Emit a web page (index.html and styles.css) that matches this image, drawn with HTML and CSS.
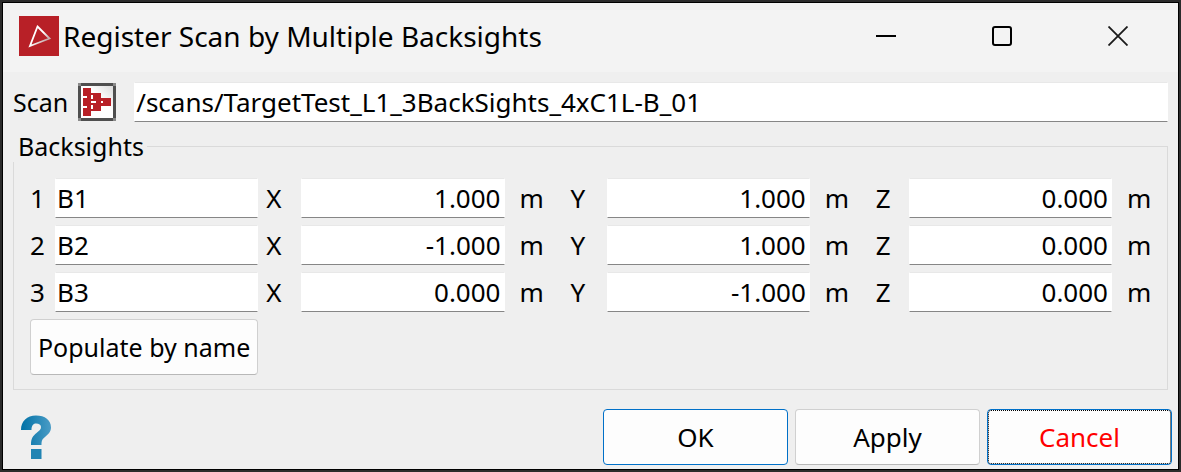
FILE: index.html
```
<!DOCTYPE html>
<html lang="en">
<head>
  <meta charset="UTF-8">
  <meta name="viewport" content="width=device-width, initial-scale=1.0">
  <title>Register Scan by Multiple Backsights</title>
  <link rel="stylesheet" href="styles.css">
</head>
<body>
  <div class="window">
    <header class="titlebar">
      <svg class="app-icon" viewBox="0 0 40 40" aria-hidden="true">
        <defs>
          <linearGradient id="edge" x1="0" y1="0" x2="1" y2="1">
            <stop offset="0.5" stop-color="#fff"/>
            <stop offset="0.75" stop-color="#c9b0b2"/>
          </linearGradient>
        </defs>
        <rect width="40" height="40" fill="#b82027"/>
        <path d="M18.5 10.5 L30.500 22.500 L11 30 Z" fill="none" stroke="url(#edge)" stroke-width="1.8"/>
      </svg>
      <h1 class="title">Register Scan by Multiple Backsights</h1>
      <div class="window-buttons">
        <button type="button" aria-label="Minimize">
          <svg viewBox="0 0 20 20"><path d="M0 10H20" stroke="#000" stroke-width="2"/></svg>
        </button>
        <button type="button" aria-label="Maximize">
          <svg viewBox="0 0 20 20"><rect x="1" y="1" width="18" height="18" rx="2" fill="none" stroke="#000" stroke-width="2"/></svg>
        </button>
        <button type="button" aria-label="Close">
          <svg viewBox="0 0 20 20"><path d="M0.5 0.5L19.5 19.5M19.5 0.5L0.5 19.5" stroke="#1a1a1a" stroke-width="1.8"/></svg>
        </button>
      </div>
    </header>

    <form class="content">
      <div class="scan-row">
        <label for="scan" class="caption">Scan</label>
        <button type="button" class="pick" aria-label="Select scan">
          <svg viewBox="0 0 38 38">
            <defs>
              <linearGradient id="shade" x1="0" y1="1" x2="1" y2="0">
                <stop offset="0.6" stop-color="#fff"/>
                <stop offset="1" stop-color="#dcdcdc"/>
              </linearGradient>
            </defs>
            <rect width="38" height="38" fill="#8a8a8a"/>
            <path d="M3 0H35V3H38V35H35V38H3V35H0V3H3Z" fill="#4f4f4f"/>
            <rect x="3" y="3" width="32" height="32" fill="url(#shade)"/>
            <g fill="#b82027">
              <path d="M5 5h8v8h-8zM5 15h8v8h-8zM5 25h8v8h-8z"/>
              <path d="M15 10h8v8h-8zM15 20h8v8h-8zM25 15h8v8h-8z"/>
              <path d="M13 10h2v2h-2zM13 16h2v2h-2zM13 20h2v2h-2zM13 26h2v2h-2z"/>
              <path d="M23 15h2v3h-2zM23 20h2v3h-2zM9 13h4v2h-4zM9 23h4v2h-4zM18 18h5v2h-5z"/>
            </g>
          </svg>
        </button>
        <input type="text" id="scan" class="field" value="/scans/TargetTest_L1_3BackSights_4xC1L-B_01">
      </div>

      <fieldset class="group">
        <legend class="caption">Backsights</legend>
        <div class="points">
          <label for="name1">1</label>
          <input type="text" id="name1" class="field" value="B1">
          <label for="x1" class="x">X</label>
          <input type="text" id="x1" class="field num" value="1.000">
          <span class="unit">m</span>
          <label for="y1" class="axis">Y</label>
          <input type="text" id="y1" class="field num" value="1.000">
          <span class="unit">m</span>
          <label for="z1" class="axis">Z</label>
          <input type="text" id="z1" class="field num" value="0.000">
          <span class="unit">m</span>

          <label for="name2">2</label>
          <input type="text" id="name2" class="field" value="B2">
          <label for="x2" class="x">X</label>
          <input type="text" id="x2" class="field num" value="-1.000">
          <span class="unit">m</span>
          <label for="y2" class="axis">Y</label>
          <input type="text" id="y2" class="field num" value="1.000">
          <span class="unit">m</span>
          <label for="z2" class="axis">Z</label>
          <input type="text" id="z2" class="field num" value="0.000">
          <span class="unit">m</span>

          <label for="name3">3</label>
          <input type="text" id="name3" class="field" value="B3">
          <label for="x3" class="x">X</label>
          <input type="text" id="x3" class="field num" value="0.000">
          <span class="unit">m</span>
          <label for="y3" class="axis">Y</label>
          <input type="text" id="y3" class="field num" value="-1.000">
          <span class="unit">m</span>
          <label for="z3" class="axis">Z</label>
          <input type="text" id="z3" class="field num" value="0.000">
          <span class="unit">m</span>

          <button type="button" class="btn caption populate">Populate by name</button>
        </div>
      </fieldset>

      <footer class="actions">
        <button type="button" class="help" aria-label="Help">
          <svg viewBox="0 0 30 44">
            <defs>
              <linearGradient id="blue" x1="0" y1="0" x2="1" y2="0">
                <stop offset="0" stop-color="#0071a6"/>
                <stop offset="1" stop-color="#4a9cc6"/>
              </linearGradient>
            </defs>
            <path d="M0 15C0 6 6 0.500 15 0.500C24 0.500 30 5 30 12.500C30 17 27 19.500 24 22C21.500 24 20.500 25 20.500 30H10C10 23 12 21 15.500 18C18.500 15.500 20 14.500 20 12C20 10 18 8.500 15 8.500C12 8.500 10.500 11 10.500 15Z" fill="url(#blue)"/>
            <rect x="10" y="34" width="10.500" height="10" fill="#2184b3"/>
          </svg>
        </button>
        <button type="submit" class="btn ok">OK</button>
        <button type="button" class="btn">Apply</button>
        <button type="button" class="btn cancel">Cancel</button>
      </footer>
    </form>
  </div>
</body>
</html>
```
FILE: styles.css
```
:root {
  --bg: #efefef;
  --frame: #2b2b2b;
  --line: #dadada;
  --accent: #0070c8;
  --red: #ff0000;
}

* {
  box-sizing: border-box;
}

body {
  margin: 0;
  padding: 2px;
  min-height: 100vh;
  display: flex;
  background: var(--frame);
  color: #000;
  font-family: "Noto Sans", sans-serif;
  font-size: 26px;
  line-height: 32px;
}

button, input {
  font: inherit;
  color: inherit;
}

svg {
  display: block;
}

.window {
  flex: 1;
  min-width: 0;
  display: flex;
  flex-direction: column;
  border: 1px solid #000;
  background: var(--bg);
}

/* title bar */
.titlebar {
  display: flex;
  align-items: center;
  height: 69px;
  padding: 0 2px 3px 16px;
  background: #f3f3f3;
}

.app-icon {
  width: 40px;
  height: 40px;
}

.title {
  flex: 1;
  margin: 0 0 0 4px;
  font-size: 28px;
  font-weight: 400;
}

.window-buttons {
  display: flex;
}

.window-buttons button {
  display: flex;
  align-items: center;
  justify-content: center;
  width: 116px;
  height: 66px;
  padding: 0;
  border: none;
  background: none;
}

.window-buttons svg {
  width: 20px;
  height: 20px;
}

/* content */
.content {
  flex: 1;
  display: flex;
  flex-direction: column;
  padding: 10px 10px 4px;
}

.caption {
  font-size: 25px;
}

.scan-row {
  display: flex;
  align-items: center;
  margin-bottom: 8px;
}

.pick {
  width: 38px;
  height: 38px;
  margin: 0 18px 0 10px;
  padding: 0;
  border: none;
  background: none;
}

.field {
  flex: 1;
  min-width: 0;
  width: 100%;
  height: 40px;
  padding: 0 1px;
  border: 1px solid #fff;
  border-top-color: #e8e8e8;
  border-bottom-color: #868686;
  border-radius: 1px;
  background: #fff;
  outline: none;
}

.num {
  padding-right: 3px;
  text-align: right;
}

.group {
  min-width: 0;
  margin: 0;
  padding: 16px 0 14px 16px;
  border: 1px solid var(--line);
}

.group legend {
  margin-left: -17px;
  padding: 0 3px 0 5px;
  background: var(--bg);
}

.points {
  display: grid;
  grid-template-columns: 25px 1fr 43px 1fr 51px 51px 1fr 51px 48px 1fr 55px;
  row-gap: 7px;
  align-items: center;
}

.x {
  padding-left: 8px;
}

.axis, .unit {
  padding-left: 15px;
}

.btn {
  height: 56px;
  padding: 0 6px;
  border: 1px solid #d0d0d0;
  border-bottom-color: #b8b8b8;
  border-radius: 4px;
  background: #fdfdfd;
  white-space: nowrap;
}

.populate {
  grid-column: 1 / 3;
}

/* bottom buttons */
.actions {
  display: flex;
  align-items: center;
  gap: 7px;
  margin: auto -4px 0 8px;
}

.actions .btn {
  width: 185px;
}

.help {
  margin-right: auto;
  padding: 0;
  border: none;
  background: none;
}

.help svg {
  width: 30px;
  height: 44px;
}

.actions .ok {
  border-color: var(--accent);
}

.actions .cancel {
  border-color: var(--accent);
  outline: 1px dotted #000;
  outline-offset: -2px;
  color: var(--red);
}
```
